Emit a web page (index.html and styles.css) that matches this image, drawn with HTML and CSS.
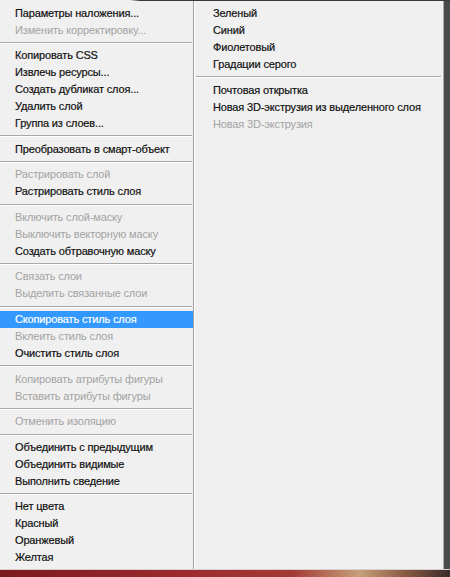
FILE: index.html
```html
<!DOCTYPE html>
<html lang="ru">
<head>
<meta charset="utf-8">
<link rel="stylesheet" href="styles.css">
</head>
<body>
<div class="screen">
  <div class="topline"></div>
  <div class="menu">
    <div class="col col-left">
      <div class="item">Параметры наложения...</div>
      <div class="item off">Изменить корректировку...</div>
      <div class="sep"></div>
      <div class="item">Копировать CSS</div>
      <div class="item">Извлечь ресурсы...</div>
      <div class="item">Создать дубликат слоя...</div>
      <div class="item">Удалить слой</div>
      <div class="item">Группа из слоев...</div>
      <div class="sep"></div>
      <div class="item">Преобразовать в смарт-объект</div>
      <div class="sep"></div>
      <div class="item off">Растрировать слой</div>
      <div class="item">Растрировать стиль слоя</div>
      <div class="sep"></div>
      <div class="item off">Включить слой-маску</div>
      <div class="item off">Выключить векторную маску</div>
      <div class="item">Создать обтравочную маску</div>
      <div class="sep"></div>
      <div class="item off">Связать слои</div>
      <div class="item off">Выделить связанные слои</div>
      <div class="sep"></div>
      <div class="item active">Скопировать стиль слоя</div>
      <div class="item off">Вклеить стиль слоя</div>
      <div class="item">Очистить стиль слоя</div>
      <div class="sep"></div>
      <div class="item off">Копировать атрибуты фигуры</div>
      <div class="item off">Вставить атрибуты фигуры</div>
      <div class="sep"></div>
      <div class="item off">Отменить изоляцию</div>
      <div class="sep"></div>
      <div class="item">Объединить с предыдущим</div>
      <div class="item">Объединить видимые</div>
      <div class="item">Выполнить сведение</div>
      <div class="sep"></div>
      <div class="item">Нет цвета</div>
      <div class="item">Красный</div>
      <div class="item">Оранжевый</div>
      <div class="item">Желтая</div>
    </div>
    <div class="col col-right">
      <div class="item">Зеленый</div>
      <div class="item">Синий</div>
      <div class="item">Фиолетовый</div>
      <div class="item">Градации серого</div>
      <div class="sep"></div>
      <div class="item">Почтовая открытка</div>
      <div class="item">Новая 3D-экструзия из выделенного слоя</div>
      <div class="item off">Новая 3D-экструзия</div>
    </div>
  </div>
  <div class="photo"></div>
</div>
</body>
</html>
```
FILE: styles.css
```css
html, body {
  margin: 0;
  padding: 0;
  background: #4a4a4a;
}
.screen {
  width: 450px;
  height: 577px;
  display: flex;
  flex-direction: column;
  overflow: hidden;
  background: #4b4b4b;
}
.topline {
  height: 1px;
  flex: none;
  background: linear-gradient(to right, #f0f0f0 0, #f0f0f0 130px, #3a3a3a 140px, #3a3a3a 100%);
}
.menu {
  flex: none;
  width: 443px;
  height: 568px;
  display: flex;
  background: #f0f0f0;
  border-right: 1px solid #a9a9a9;
  font-family: "Liberation Sans", Arial, sans-serif;
  font-size: 11px;
  letter-spacing: -0.15px;
  color: #111111;
  box-sizing: content-box;
  overflow: hidden;
}
.col {
  display: flex;
  flex-direction: column;
  padding-top: 3.5px;
}
.col-left {
  width: 193px;
  flex: none;
}
.col-right {
  flex: 1;
  border-left: 1px solid #a0a0a0;
  box-shadow: inset 1px 0 0 #ffffff;
  padding-left: 1px;
}
.item {
  flex: none;
  height: 17px;
  line-height: 17px;
  padding-left: 15px;
  white-space: nowrap;
  -webkit-text-stroke: 0.2px currentColor;
}
.col-right .item {
  padding-left: 18px;
}
.item.off {
  color: #a3a3a3;
  -webkit-text-stroke: 0;
}
.item.active {
  background: #3399ff;
  color: #ffffff;
}
.sep {
  flex: none;
  height: 1px;
  background: #a8a8a8;
  border-bottom: 1px solid #ffffff;
  margin: 3.3px 1px 3.3px 0;
}
.col-right .sep {
  margin: 3.5px 2px 3.5px 1px;
}
.photo {
  flex: 1;
  border-top: 1px solid #d8d0d0;
  background: linear-gradient(to right, #7a1a1f 0, #9b2a2e 40%, #a33a35 65%, #c7a07a 80%, #8a5a44 90%, #3a2a2a 100%);
}
```
